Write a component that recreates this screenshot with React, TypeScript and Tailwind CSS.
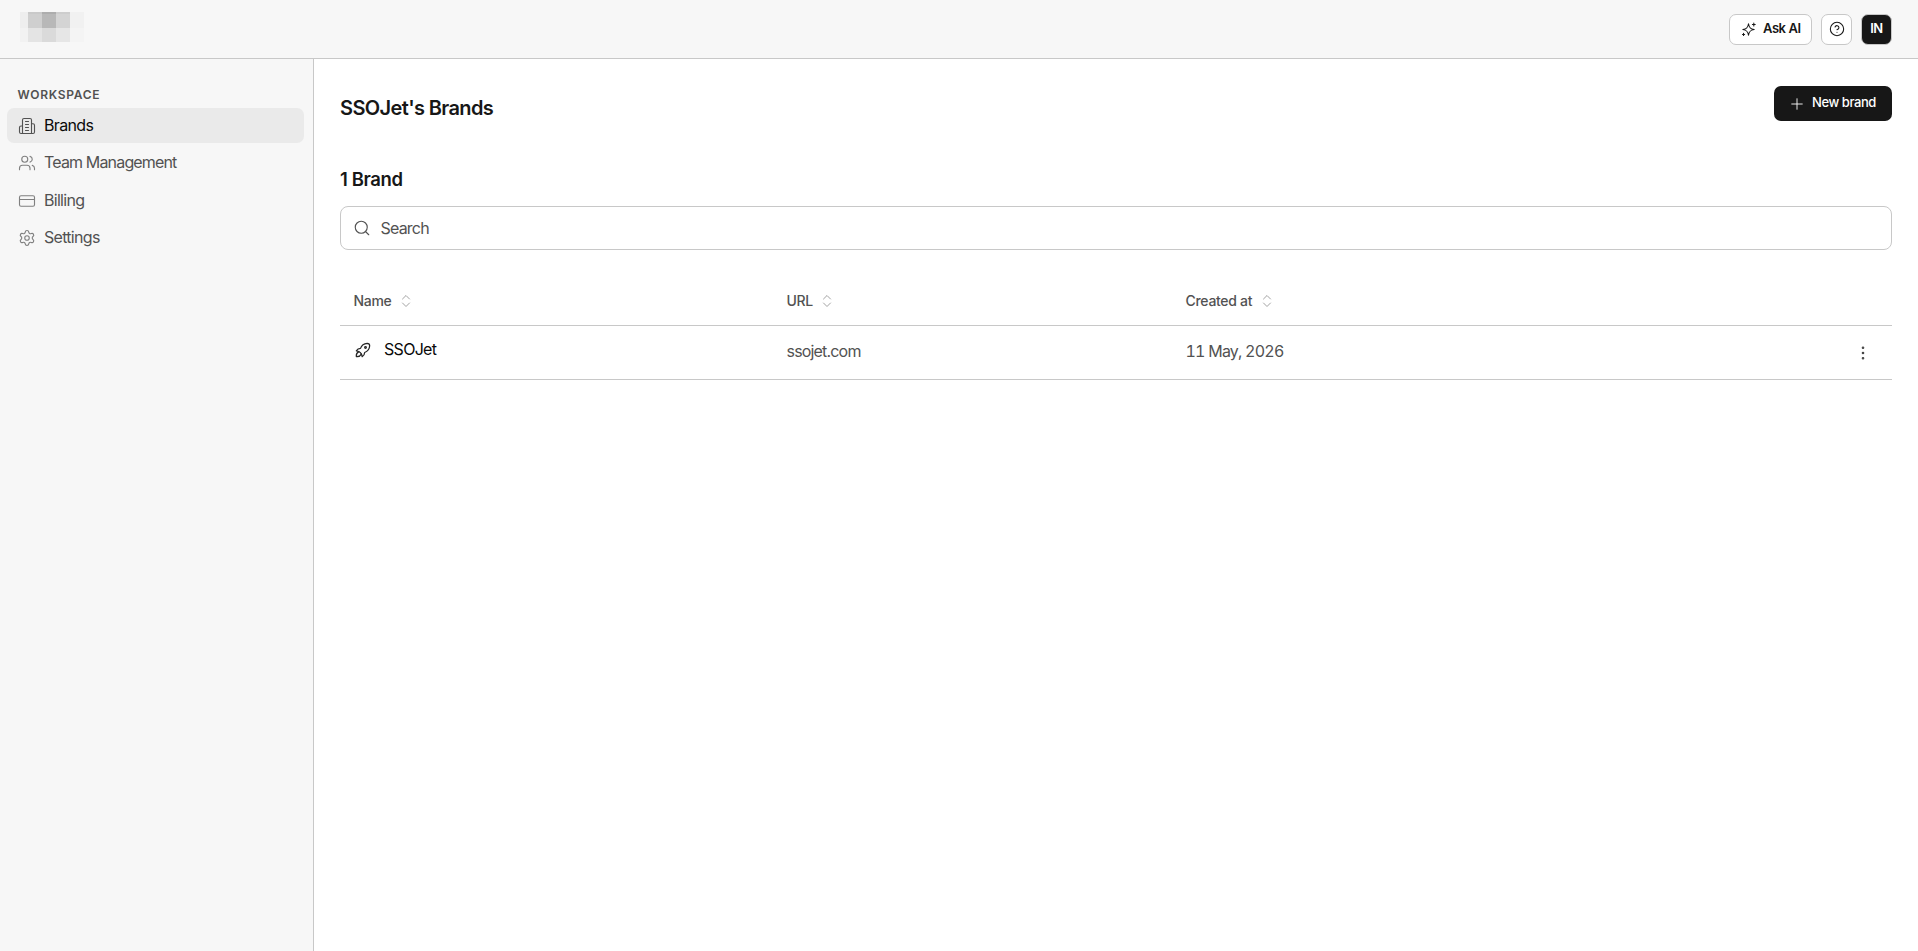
import React from "react";
import { Users, CreditCard, Settings, Plus, Search, CircleHelp, EllipsisVertical } from "lucide-react";

type IconProps = { className?: string };

function BuildingIcon({ className }: IconProps) {
  return (
    <svg viewBox="0 0 24 24" fill="none" stroke="currentColor" strokeWidth="1.5" strokeLinecap="round" strokeLinejoin="round" className={className}>
      <path d="M6 22V4a2 2 0 0 1 2-2h8a2 2 0 0 1 2 2v18Z" />
      <path d="M6 12H4a2 2 0 0 0-2 2v6a2 2 0 0 0 2 2h2" />
      <path d="M18 9h2a2 2 0 0 1 2 2v9a2 2 0 0 1-2 2h-2" />
      <path d="M10 6h4M10 10h4M10 14h4M10 18h4" />
    </svg>
  );
}

function SparklesIcon({ className }: IconProps) {
  return (
    <svg viewBox="0 0 24 24" fill="none" stroke="currentColor" strokeWidth="1.5" strokeLinecap="round" strokeLinejoin="round" className={className}>
      <path d="M12 4c-.8 5.400-2.600 7.200-8 8 5.400.8 7.200 2.600 8 8 .8-5.400 2.600-7.200 8-8-5.400-.8-7.200-2.600-8-8Z" />
      <path d="M5 17.500v3M3.500 19h3M19.500 3v4M17.500 5h4" />
    </svg>
  );
}

function RocketIcon({ className }: IconProps) {
  return (
    <svg viewBox="0 0 24 24" fill="none" stroke="currentColor" strokeWidth="1.5" strokeLinecap="round" strokeLinejoin="round" className={className}>
      <path d="M4 13a8 8 0 0 1 7 7a6 6 0 0 0 3 -5a9 9 0 0 0 6 -8a3 3 0 0 0 -3 -3a9 9 0 0 0 -8 6a6 6 0 0 0 -5 3" />
      <path d="M7 14a6 6 0 0 0 -3 6a6 6 0 0 0 6 -3" />
      <circle cx="15" cy="9" r="1" />
    </svg>
  );
}

function SortIcon() {
  return (
    <svg viewBox="0 0 10 14" fill="none" stroke="currentColor" strokeWidth="1" strokeLinecap="round" strokeLinejoin="round" className="h-3.5 w-2.5 text-[#a3a3a3]">
      <path d="M1.500 5 5 1.500 8.500 5M1.500 9 5 12.500 8.500 9" />
    </svg>
  );
}

const navItems = [
  { label: "Brands", Icon: BuildingIcon, active: true, tracking: "tracking-[-0.65px]" },
  { label: "Team Management", Icon: Users, active: false, tracking: "tracking-[-0.84px]" },
  { label: "Billing", Icon: CreditCard, active: false, tracking: "tracking-[-0.7px]" },
  { label: "Settings", Icon: Settings, active: false, tracking: "tracking-[-0.7px]" },
];

function TopBar() {
  return (
    <header className="flex h-[59px] shrink-0 items-center justify-between border-b border-[#c8c8c8] bg-[#f7f7f7] pr-[26px] pl-5">
      <div className="mb-1 grid h-[30px] grid-cols-[8px_14px_14px_14px_14px] grid-rows-[2px_14px_14px]">
        <i className="bg-[#eeeeee]" /><i className="bg-[#c9c9c9]" /><i className="bg-[#adadad]" /><i className="bg-[#cdcdcd]" /><i className="bg-[#f1f1f1]" />
        <i className="bg-[#eeeeee]" /><i className="bg-[#cfcfcf]" /><i className="bg-[#b8b8b8]" /><i className="bg-[#d4d4d4]" /><i className="bg-[#f1f1f1]" />
        <i className="bg-[#f2f2f2]" /><i className="bg-[#e4e4e4]" /><i className="bg-[#dadada]" /><i className="bg-[#e6e6e6]" /><i className="bg-[#f4f4f4]" />
      </div>
      <div className="flex items-center gap-[9px]">
        <button className="flex h-[31px] w-[83px] items-center rounded-[7px] border border-[#c8c8c8] bg-white pl-[10px] text-[13px] font-semibold text-[#171717]">
          <SparklesIcon className="mr-[6px] size-[17px] shrink-0" />
          <span className="tracking-[-0.45px] whitespace-nowrap">Ask AI</span>
        </button>
        <button className="flex size-[31px] items-center justify-center rounded-[7px] border border-[#c8c8c8] bg-white text-[#171717]">
          <CircleHelp className="size-4" strokeWidth={1.6} />
        </button>
        <button className="flex size-[31px] items-center justify-center rounded-[7px] border border-[#c8c8c8] bg-[#171717] text-[13px] font-semibold tracking-[-0.4px] text-white">IN</button>
      </div>
    </header>
  );
}

function Sidebar() {
  return (
    <aside className="w-[314px] shrink-0 border-r border-[#c8c8c8] bg-[#f7f7f7] pt-[27px] pr-[9px] pl-[7px]">
      <h2 className="pl-[10.5px] text-xs leading-[18px] font-semibold tracking-[0.72px] text-[#525252]">WORKSPACE</h2>
      <nav className="mt-1 flex flex-col gap-[2.500px]">
        {navItems.map(({ label, Icon, active, tracking }) => (
          <a key={label} className={active ? "flex h-[35px] items-center rounded-[7px] bg-[#eaeaea] pl-[11px] text-[#0a0a0a]" : "flex h-[35px] items-center rounded-[7px] pl-[11px] text-[#525252]"}>
            <Icon className={active ? "mr-2 size-[18px] text-[#525252]" : "mr-2 size-[18px] text-[#808080]"} strokeWidth={1.5} />
            <span className={`pb-[2px] text-base ${tracking}`}>{label}</span>
          </a>
        ))}
      </nav>
    </aside>
  );
}

function HeaderCell({ label }: { label: string }) {
  return (
    <div className="flex items-center gap-[9.5px] pt-px text-sm font-medium tracking-[-0.3px] text-[#525252]">
      <span>{label}</span>
      <SortIcon />
    </div>
  );
}

function BrandTable() {
  return (
    <div className="mt-[25px]">
      <div className="grid h-[51px] grid-cols-[433px_399px_1fr] items-center border-b border-[#c8c8c8] pl-[13.5px]">
        <HeaderCell label="Name" />
        <HeaderCell label="URL" />
        <HeaderCell label="Created at" />
      </div>
      <div className="grid h-[54px] grid-cols-[433px_399px_1fr_auto] items-center border-b border-[#c8c8c8] pr-[20px] pl-[13.5px] text-base text-[#525252]">
        <div className="flex items-center gap-[11.5px] pb-[7px] text-[#0a0a0a]">
          <RocketIcon className="mt-[2px] -ml-px size-5 text-[#262626]" />
          <span className="tracking-[-0.7px]">SSOJet</span>
        </div>
        <span className="pb-[3px] tracking-[-0.82px]">ssojet.com</span>
        <span className="pb-[3px] tracking-[-0.78px] tabular-nums">11 May, 2026</span>
        <EllipsisVertical className="size-[18px] text-[#404040]" strokeWidth={1.5} />
      </div>
    </div>
  );
}

export default function App() {
  return (
    <div className="flex h-screen flex-col bg-white font-['Inter',sans-serif] text-[#171717]">
      <TopBar />
      <div className="flex min-h-0 flex-1">
        <Sidebar />
        <main className="flex-1 pt-[27px] pr-[26px] pl-[26px]">
          <div className="flex items-start justify-between">
            <h1 className="pt-2 text-[20px] leading-7 font-semibold tracking-[-0.62px]">SSOJet's Brands</h1>
            <button className="flex h-[35px] w-[118px] items-center rounded-[7px] bg-[#171717] pl-[14px] text-[13px] font-medium text-white">
              <Plus className="mr-[6px] size-[18px] shrink-0" strokeWidth={1.2} />
              <span className="pb-px tracking-[-0.42px] whitespace-nowrap">New brand</span>
            </button>
          </div>
          <h2 className="mt-[43px] text-[18.5px] leading-7 font-semibold tracking-[-0.4px]">1 Brand</h2>
          <div className="mt-[13px] flex h-11 items-center rounded-lg border border-[#c8c8c8] pl-3">
            <Search className="mr-[9.5px] size-[18px] text-[#525252]" strokeWidth={1.5} />
            <span className="text-base tracking-[-0.8px] text-[#525252]">Search</span>
          </div>
          <BrandTable />
        </main>
      </div>
    </div>
  );
}
